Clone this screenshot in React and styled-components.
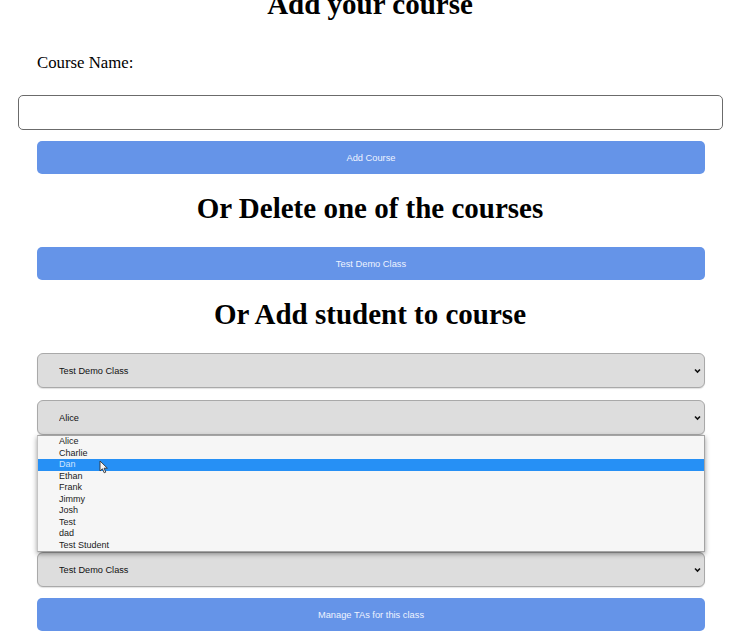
import React from "react";
import styled, { createGlobalStyle } from "styled-components";

const Global = createGlobalStyle`
  html, body { margin: 0; padding: 0; background: #fff; overflow: hidden; }
  body { font-family: "Liberation Serif", "Times New Roman", serif; color: #000; }
`;

const Page = styled.div`
  width: 740px;
  height: 636px;
  display: flex;
  flex-direction: column;
  overflow: hidden;
`;

const Heading = styled.h2`
  margin: ${(p) => p.$top ?? 17}px 0 ${(p) => p.$bottom ?? 21}px;
  font-family: "Liberation Serif", "Times New Roman", serif;
  font-weight: bold;
  font-size: 29px;
  line-height: 35px;
  text-align: center;
`;

const Label = styled.label`
  margin: 31px 0 0 37px;
  font-size: 16.8px;
  line-height: 20px;
`;

const TextInput = styled.input`
  box-sizing: border-box;
  margin: 22px 0 0 18px;
  width: 705px;
  height: 35px;
  border: 1.5px solid #6b6b6b;
  border-radius: 5px;
  background: #fff;
  outline: none;
`;

const Button = styled.button`
  box-sizing: border-box;
  margin: ${(p) => p.$top ?? 11}px 0 0 37px;
  width: 668px;
  height: 33px;
  border: none;
  border-radius: 5px;
  background: #6594e8;
  color: #eef3ff;
  font-family: "Liberation Sans", Arial, sans-serif;
  font-size: 9.3px;
  cursor: pointer;
`;

const SelectWrap = styled.div`
  position: relative;
  margin: ${(p) => p.$top ?? 12}px 0 0 37px;
  width: 668px;
  height: 35px;
`;

const Select = styled.select`
  box-sizing: border-box;
  appearance: none;
  width: 100%;
  height: 100%;
  padding: 0 0 0 21px;
  border: 1px solid #a9a9a9;
  border-radius: 6px;
  background: #dddddd;
  color: #111;
  font-family: "Liberation Sans", Arial, sans-serif;
  font-size: 9.2px;
  box-shadow: 0 1px 1px rgba(0, 0, 0, 0.12);
`;

const Chevron = styled.svg`
  position: absolute;
  right: 4px;
  top: 50%;
  margin-top: -3px;
  width: 7px;
  height: 6px;
  pointer-events: none;
`;

const Popup = styled.ul`
  position: absolute;
  z-index: 5;
  top: 35px;
  left: 0;
  width: 668px;
  box-sizing: border-box;
  margin: 0;
  padding: 0;
  list-style: none;
  background: #f6f6f6;
  border: 1px solid #a4a4a4;
  border-left-color: #c4c4c4;
  box-shadow: 0 2px 5px rgba(0, 0, 0, 0.4);
`;

const Option = styled.li`
  height: 11.5px;
  line-height: 11.5px;
  padding-left: 21px;
  font-family: "Liberation Sans", Arial, sans-serif;
  font-size: 9px;
  color: ${(p) => (p.$active ? "#cfe5ff" : "#1a1a1a")};
  background: ${(p) => (p.$active ? "#2690f5" : "transparent")};
`;

const Cursor = styled.svg`
  position: absolute;
  left: 61px;
  top: 24px;
  width: 10px;
  height: 14px;
`;

const students = ["Alice", "Charlie", "Dan", "Ethan", "Frank", "Jimmy", "Josh", "Test", "dad", "Test Student"];

function ChevronIcon() {
  return (
    <Chevron viewBox="0 0 7 6">
      <path d="M1 1.5 L3.5 4 L6 1.5" fill="none" stroke="#111" strokeWidth="1.6" />
    </Chevron>
  );
}

export default function App() {
  return (
    <>
      <Global />
      <Page>
        <Heading as="h1" $top={-13} $bottom={0}>Add your course</Heading>
        <Label htmlFor="cname">Course Name:</Label>
        <TextInput id="cname" type="text" />
        <Button>Add Course</Button>

        <Heading>Or Delete one of the courses</Heading>
        <Button $top={0}>Test Demo Class</Button>

        <Heading>Or Add student to course</Heading>
        <SelectWrap $top={0}>
          <Select defaultValue="Test Demo Class">
            <option>Test Demo Class</option>
          </Select>
          <ChevronIcon />
        </SelectWrap>
        <SelectWrap>
          <Select defaultValue="Alice">
            {students.map((s) => (
              <option key={s}>{s}</option>
            ))}
          </Select>
          <ChevronIcon />
          <Popup>
            {students.map((s) => (
              <Option key={s} $active={s === "Dan"}>
                {s}
              </Option>
            ))}
            <Cursor viewBox="0 0 10 14">
              <path d="M1 1 L1 11 L3.4 8.8 L5.2 12.8 L6.8 12.1 L5.1 8.2 L8.4 8.2 Z" fill="#f4f4f4" stroke="#333" strokeWidth="0.9" strokeLinejoin="round" />
            </Cursor>
          </Popup>
        </SelectWrap>
        <Button>Add Student</Button>

        <Heading>Or Manage TAs of a course</Heading>
        <SelectWrap $top={0}>
          <Select defaultValue="Test Demo Class">
            <option>Test Demo Class</option>
          </Select>
          <ChevronIcon />
        </SelectWrap>
        <Button>Manage TAs for this class</Button>
      </Page>
    </>
  );
}
